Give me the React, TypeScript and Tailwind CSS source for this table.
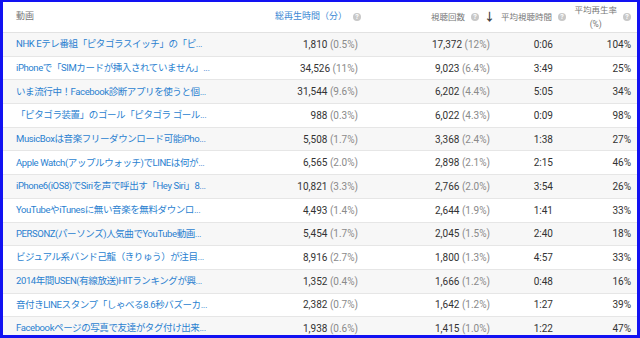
import React from 'react';

type Row = {
  title: string;
  watch: string;
  watchPct: string;
  views: string;
  viewsPct: string;
  avg: string;
  rate: string;
};

const rows: Row[] = [
  { title: 'NHK Eテレ番組「ピタゴラスイッチ」の「ピ...', watch: '1,810', watchPct: '(0.5%)', views: '17,372', viewsPct: '(12%)', avg: '0:06', rate: '104%' },
  { title: 'iPhoneで「SIMカードが挿入されていません」...', watch: '34,526', watchPct: '(11%)', views: '9,023', viewsPct: '(6.4%)', avg: '3:49', rate: '25%' },
  { title: 'いま流行中！Facebook診断アプリを使うと個...', watch: '31,544', watchPct: '(9.6%)', views: '6,202', viewsPct: '(4.4%)', avg: '5:05', rate: '34%' },
  { title: '「ピタゴラ装置」のゴール「ピタゴラ ゴール...', watch: '988', watchPct: '(0.3%)', views: '6,022', viewsPct: '(4.3%)', avg: '0:09', rate: '98%' },
  { title: 'MusicBoxは音楽フリーダウンロード可能iPho...', watch: '5,508', watchPct: '(1.7%)', views: '3,368', viewsPct: '(2.4%)', avg: '1:38', rate: '27%' },
  { title: 'Apple Watch(アップルウォッチ)でLINEは何が...', watch: '6,565', watchPct: '(2.0%)', views: '2,898', viewsPct: '(2.1%)', avg: '2:15', rate: '46%' },
  { title: 'iPhone6(iOS8)でSiriを声で呼出す「Hey Siri」8...', watch: '10,821', watchPct: '(3.3%)', views: '2,766', viewsPct: '(2.0%)', avg: '3:54', rate: '26%' },
  { title: 'YouTubeやiTunesに無い音楽を無料ダウンロ...', watch: '4,493', watchPct: '(1.4%)', views: '2,644', viewsPct: '(1.9%)', avg: '1:41', rate: '33%' },
  { title: 'PERSONZ(パーソンズ)人気曲でYouTube動画...', watch: '5,454', watchPct: '(1.7%)', views: '2,045', viewsPct: '(1.5%)', avg: '2:40', rate: '18%' },
  { title: 'ビジュアル系バンド己龍（きりゅう）が注目...', watch: '8,916', watchPct: '(2.7%)', views: '1,800', viewsPct: '(1.3%)', avg: '4:57', rate: '33%' },
  { title: '2014年間USEN(有線放送)HITランキングが興...', watch: '1,352', watchPct: '(0.4%)', views: '1,666', viewsPct: '(1.2%)', avg: '0:48', rate: '16%' },
  { title: '音付きLINEスタンプ「しゃべる8.6秒バズーカ...', watch: '2,382', watchPct: '(0.7%)', views: '1,642', viewsPct: '(1.2%)', avg: '1:27', rate: '39%' },
  { title: 'Facebookページの写真で友達がタグ付け出来...', watch: '1,938', watchPct: '(0.6%)', views: '1,415', viewsPct: '(1.0%)', avg: '1:22', rate: '47%' },
];

const Help = () => (
  <span className="inline-flex shrink-0 items-center justify-center w-[8px] h-[8px] rounded-full bg-[#c8c8c8] text-white text-[7px] leading-none font-bold ml-[6px]">?</span>
);

export default function App() {
  return (
    <div
      className="w-[640px] h-[338px] overflow-hidden bg-white border-[#1212f2] border-t-2 border-l-[3px] border-r-[3px] border-b-[3px] text-[10px] text-[#333]"
      style={{ fontFamily: 'Roboto, "Noto Sans CJK JP", sans-serif' }}
    >
      {/* header */}
      <div className="flex h-[31px] border-b border-[#e2e2e2] text-[8.5px] text-[#777] whitespace-nowrap">
        <div className="w-[222px] pl-[13px] flex items-center text-[9px]">動画</div>
        <div className="w-[136px] flex items-center justify-end text-[#3b88d4] text-[9px]">
          総再生時間（分）<Help />
        </div>
        <div className="w-[130px] flex items-center justify-end">
          <div className="flex items-center mr-[-4px]">
            視聴回数<Help />
            <span className="ml-[5px] text-[#444] text-[11px] font-bold leading-none">↓</span>
          </div>
        </div>
        <div className="w-[64px] flex items-center justify-end">
          <div className="flex items-center mr-[-11px]">
            平均視聴時間<Help />
          </div>
        </div>
        <div className="w-[76px] flex items-center justify-end">
          <div className="flex flex-col items-center leading-[14px]">
            <span>平均再生率</span>
            <span>(%)</span>
          </div>
          <Help />
        </div>
      </div>

      {rows.map((r, i) => (
        <div
          key={i}
          className={`flex items-center h-[23.7px] border-b border-[#e6e6e6] ${i % 2 === 0 ? 'bg-[#f7f7f7]' : 'bg-white'}`}
        >
          <div className="w-[222px] pl-[13px] text-[#2a7fd0] text-[9.5px] tracking-[-0.4px] whitespace-nowrap">{r.title}</div>
          <div className="w-[136px] text-right pr-[3px]">
            {r.watch} <span className="text-[#8a8a8a]">{r.watchPct}</span>
          </div>
          <div className="w-[130px] text-right pr-[1px]">
            {r.views} <span className="text-[#8a8a8a]">{r.viewsPct}</span>
          </div>
          <div className="w-[64px] text-right pr-[2px]">{r.avg}</div>
          <div className="w-[76px] text-right">{r.rate}</div>
        </div>
      ))}
    </div>
  );
}
